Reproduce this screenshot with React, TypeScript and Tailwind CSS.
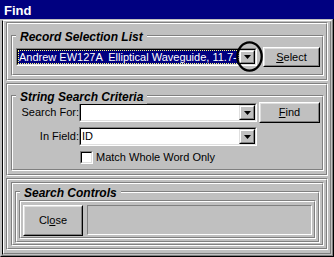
import React from "react";

const Etched = ({ className = "", inner = "", children }: { className?: string; inner?: string; children?: React.ReactNode }) => (
  <div className={`border border-t-[#808080] border-l-[#808080] border-b-white border-r-white ${className}`}>
    <div className={`h-full border border-t-white border-l-white border-b-[#808080] border-r-[#808080] ${inner}`}>{children}</div>
  </div>
);

const Group = ({ label, className = "", inner = "", children }: { label: string; className?: string; inner?: string; children?: React.ReactNode }) => (
  <div className={`relative border border-t-[#808080] border-l-[#808080] border-b-white border-r-white ${className}`}>
    <div className={`h-full border border-t-white border-l-white border-b-[#808080] border-r-[#808080] ${inner}`}>{children}</div>
    <span className="absolute left-[4px] top-[-6px] bg-[#c0c0c0] px-[4px] text-[12px] leading-[14px] font-bold italic text-black whitespace-nowrap">
      {label}
    </span>
  </div>
);

const Button = ({ className = "", children }: { className?: string; children?: React.ReactNode }) => (
  <div className={`border border-t-white border-l-white border-b-black border-r-black ${className}`}>
    <div className="h-full border border-t-[#dfdfdf] border-l-[#dfdfdf] border-b-[#808080] border-r-[#808080] flex items-center justify-center text-[11px] leading-[13px] text-black">
      {children}
    </div>
  </div>
);

const DropBtn = () => (
  <div className="w-[16px] h-full shrink-0 border border-t-[#dfdfdf] border-l-[#dfdfdf] border-b-black border-r-black">
    <div className="h-full border border-t-white border-l-white border-b-[#808080] border-r-[#808080] bg-[#c0c0c0] flex items-center justify-center">
      <svg width="7" height="4" viewBox="0 0 7 4">
        <polygon points="0,0 7,0 3.5,4" fill="black" />
      </svg>
    </div>
  </div>
);

const Combo = ({ className = "", children }: { className?: string; children?: React.ReactNode }) => (
  <div className={`border border-t-[#808080] border-l-[#808080] border-b-white border-r-white ${className}`}>
    <div className="h-full border border-t-black border-l-black border-b-[#dfdfdf] border-r-[#dfdfdf] bg-white flex">
      <div className="flex-1 min-w-0 h-full overflow-hidden">{children}</div>
      <DropBtn />
    </div>
  </div>
);

export default function App() {
  return (
    <div className="w-[334px] h-[257px] bg-[#c0c0c0] flex flex-col overflow-hidden font-['Liberation_Sans',Arial,sans-serif] text-black">
      {/* Title bar */}
      <div className="h-[19px] shrink-0 bg-[#000080] pl-[4px] pt-[3px]">
        <span className="text-white font-bold text-[13px] leading-[16px] block">Find</span>
      </div>
      {/* Body frame */}
      <div className="flex-1 flex flex-col border-l border-r border-b border-l-[#c0c0c0] border-r-black border-b-black">
        <div className="flex-1 flex flex-col border border-l-[#c0c0c0] border-r-[#808080] border-b-[#808080] border-t-[#c0c0c0]">
          <div className="flex-1 flex flex-col border border-l-black border-r-[#c0c0c0] border-b-[#c0c0c0] border-t-white">
            <div className="flex-1 flex flex-col border border-l-white border-r-[#808080] border-b-[#808080] border-t-[#c0c0c0] px-[2px] pb-[3px] gap-[2px]">
              {/* Panel 1 */}
              <Etched className="h-[59px] shrink-0" inner="flex flex-col">
                <Group label="Record Selection List" className="ml-[3px] mr-[2px] mt-[11px] h-[41px]" inner="pt-[10px] pl-[3px] pr-[2px]">
                  <div className="flex items-center h-[20px] gap-[6px]">
                    <div className="relative w-[241px] h-[18px] shrink-0">
                      <Combo className="w-full h-full">
                        <div className="h-full bg-[#000080] border border-dotted border-[#ffff80] text-white text-[11px] leading-[12px] whitespace-pre flex items-center">
                          Andrew EW127A  Elliptical Waveguide, 11.7-
                        </div>
                      </Combo>
                      <svg className="absolute left-[220px] top-[-7px] pointer-events-none" width="27" height="31" viewBox="0 0 27 31">
                        <ellipse cx="13.5" cy="15.5" rx="12.2" ry="14.2" fill="none" stroke="black" strokeWidth="2.3" />
                      </svg>
                    </div>
                    <Button className="w-[57px] h-[20px] shrink-0">
                      <span className="inline-block first-letter:underline">Select</span>
                    </Button>
                  </div>
                </Group>
              </Etched>

              {/* Panel 2 */}
              <Etched className="h-[93px] shrink-0" inner="flex flex-col">
                <Group label="String Search Criteria" className="ml-[3px] mr-[2px] mt-[10px] h-[76px]" inner="pt-[5px] pr-[2px] flex flex-col">
                  <div className="flex items-center h-[21px]">
                    <div className="w-[66px] shrink-0 text-right text-[11px] leading-[13px]">Search For:</div>
                    <Combo className="w-[178px] h-[19px] shrink-0" />
                    <Button className="ml-[2px] w-[61px] h-[21px] shrink-0">
                      <span className="inline-block first-letter:underline">Find</span>
                    </Button>
                  </div>
                  <div className="flex items-center h-[19px] mt-[4px]">
                    <div className="w-[66px] shrink-0 text-right text-[11px] leading-[13px]">In Field:</div>
                    <Combo className="w-[178px] h-[19px] shrink-0">
                      <div className="h-full flex items-center pl-[1px] text-[11px] leading-[13px]">ID</div>
                    </Combo>
                  </div>
                  <div className="flex items-center h-[13px] mt-[5px] pl-[67px]">
                    <div className="w-[13px] h-[13px] shrink-0 border border-t-[#808080] border-l-[#808080] border-b-white border-r-white">
                      <div className="h-full border border-t-black border-l-black border-b-[#dfdfdf] border-r-[#dfdfdf] bg-white" />
                    </div>
                    <span className="ml-[3px] text-[11px] leading-[13px]">Match Whole Word Only</span>
                  </div>
                </Group>
              </Etched>

              {/* Panel 3 */}
              <Etched className="h-[72px] shrink-0" inner="flex flex-col">
                <Etched className="ml-[3px] mr-[2px] mt-[2px] h-[64px]" inner="flex flex-col px-[2px]">
                  <Group label="Search Controls" className="mt-[7px] h-[52px]" inner="flex flex-col px-[2px]">
                    <Etched className="mt-[7px] h-[39px]" inner="flex items-start pt-[3px] px-[2px] gap-[4px]">
                      <Button className="w-[60px] h-[31px] shrink-0">
                        <span>
                          Cl<span className="underline">o</span>se
                        </span>
                      </Button>
                      <div className="flex-1 h-[30px] border border-t-[#808080] border-l-[#808080] border-b-white border-r-white" />
                    </Etched>
                  </Group>
                </Etched>
              </Etched>
            </div>
          </div>
        </div>
      </div>
    </div>
  );
}
